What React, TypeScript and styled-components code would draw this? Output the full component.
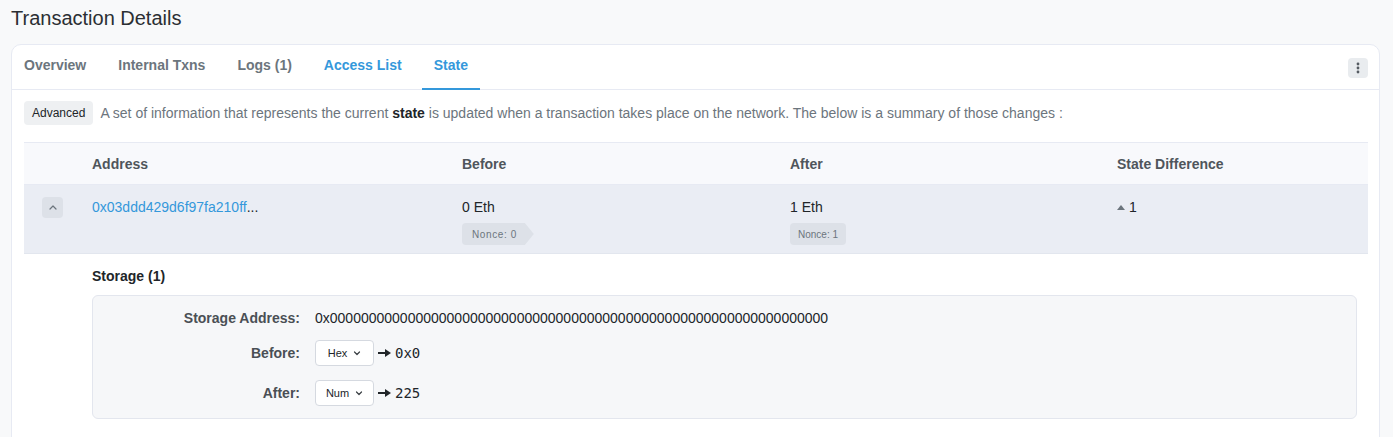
import React from "react";
import styled, { createGlobalStyle } from "styled-components";

const Global = createGlobalStyle`
  html, body { margin: 0; padding: 0; background: #f8f9fa; }
  body { font-family: "Liberation Sans", Arial, sans-serif; color: #212529; }
  * { box-sizing: border-box; }
`;

const Page = styled.div`
  padding: 0 13px 0 11px;
`;

const Title = styled.h1`
  margin: 0;
  padding-top: 6px;
  height: 44px;
  font-size: 20px;
  line-height: 24px;
  font-weight: 400;
  color: #2b2f33;
`;

const Card = styled.div`
  background: #fff;
  border: 1px solid #e7eaf3;
  border-radius: 10px;
  min-height: 420px;
`;

const TabBar = styled.div`
  display: flex;
  align-items: stretch;
  height: 45px;
  border-bottom: 1px solid #e7eaf3;
  padding-right: 11px;
`;

const Tab = styled.div<{ $active?: boolean; $blue?: boolean }>`
  display: flex;
  align-items: center;
  padding: 0 12px 4px;
  margin-right: 8px;
  font-size: 14px;
  font-weight: 700;
  color: ${(p) => (p.$blue ? "#3498db" : "#6c757d")};
  border-bottom: 2px solid ${(p) => (p.$active ? "#3498db" : "transparent")};
  margin-bottom: -1px;
`;

const Spacer = styled.div`
  flex: 1;
`;

const Kebab = styled.div`
  align-self: center;
  width: 20px;
  height: 20px;
  border-radius: 4px;
  background: #e9ecef;
  display: flex;
  align-items: center;
  justify-content: center;
  margin-top: 2px;
`;

const Body = styled.div`
  padding: 11px 11px 0 12px;
`;

const Intro = styled.div`
  display: flex;
  align-items: center;
  gap: 7px;
  font-size: 14px;
  color: #6c757d;
  margin-bottom: 17px;
  b { color: #212529; }
`;

const Badge = styled.span`
  display: inline-flex;
  align-items: center;
  height: 24px;
  padding: 0 8px;
  border-radius: 4px;
  background: #eef0f2;
  color: #212529;
  font-size: 12px;
`;

const Grid = styled.div`
  display: grid;
  grid-template-columns: 68px 370px 328px 327px 1fr;
`;

const HeadRow = styled(Grid)`
  height: 43px;
  align-items: center;
  background: #f8f9fc;
  border-top: 1px solid #e7eaf3;
  border-bottom: 1px solid #e7eaf3;
  font-size: 14px;
  font-weight: 700;
  color: #4f555b;
`;

const DataRow = styled(Grid)`
  background: #eaedf4;
  padding: 14px 0 8px;
  border-bottom: 1px solid #e2e6ee;
  font-size: 14px;
`;

const Cell = styled.div`
  display: flex;
  flex-direction: column;
  align-items: flex-start;
  gap: 7px;
  line-height: 17px;
`;

const ToggleCell = styled.div`
  padding-left: 18px;
  margin-top: -2px;
`;

const Toggle = styled.div`
  width: 21px;
  height: 21px;
  border-radius: 4px;
  background: #dde1e8;
  display: flex;
  align-items: center;
  justify-content: center;
`;

const Link = styled.span`
  color: #3498db;
  b { color: #212529; font-weight: 400; }
`;

const Nonce = styled.span<{ $arrow?: boolean }>`
  display: inline-flex;
  align-items: center;
  height: 22px;
  padding: 0 ${(p) => (p.$arrow ? "17px" : "8px")} 0 ${(p) => (p.$arrow ? "10px" : "8px")};
  font-size: 10px;
  letter-spacing: ${(p) => (p.$arrow ? "0.6px" : "0")};
  color: #6c757d;
  background: #dde1e8;
  border-radius: 4px;
  clip-path: ${(p) =>
    p.$arrow
      ? "polygon(0 0, calc(100% - 9px) 0, 100% 50%, calc(100% - 9px) 100%, 0 100%)"
      : "none"};
`;

const Diff = styled.span`
  display: inline-flex;
  align-items: center;
  gap: 4px;
  &::before {
    content: "";
    border-left: 4px solid transparent;
    border-right: 4px solid transparent;
    border-bottom: 5px solid #6c757d;
  }
`;

const StorageSection = styled.div`
  padding: 14px 11px 18px 68px;
`;

const StorageTitle = styled.div`
  font-size: 14px;
  font-weight: 700;
  line-height: 17px;
  margin-bottom: 10px;
`;

const StorageBox = styled.div`
  background: #f6f7f9;
  border: 1px solid #e3e6ee;
  border-radius: 6px;
  padding: 14px 0 12px;
  display: grid;
  grid-template-columns: 207px 1fr;
  column-gap: 15px;
  row-gap: 14px;
  align-items: center;
  font-size: 14px;
`;

const Label = styled.div`
  text-align: right;
  font-weight: 700;
  color: #4a4f55;
`;

const Value = styled.div`
  display: flex;
  align-items: center;
  gap: 4px;
`;

const Select = styled.div`
  width: 59px;
  height: 26px;
  border: 1px solid #d5d9e0;
  border-radius: 4px;
  background: #fff;
  display: flex;
  align-items: center;
  justify-content: center;
  gap: 6px;
  font-size: 11px;
  color: #212529;
`;

const Mono = styled.span`
  font-family: "DejaVu Sans Mono", "Liberation Mono", monospace;
  font-size: 14px;
`;

const Arrow = () => (
  <svg width="13" height="8" viewBox="0 0 13 8">
    <rect x="0" y="3" width="8" height="2" fill="#212529" />
    <path d="M7 0 L13 4 L7 8 Z" fill="#212529" />
  </svg>
);

const Chevron = ({ up }: { up?: boolean }) => (
  <svg width="8" height="5" viewBox="0 0 8 5">
    <path
      d={up ? "M1 4 L4 1 L7 4" : "M1.5 1 L4 3.5 L6.5 1"}
      fill="none"
      stroke={up ? "#6c757d" : "#3a3f44"}
      strokeWidth="1.2"
      strokeLinecap="round"
      strokeLinejoin="round"
    />
  </svg>
);

const Dots = () => (
  <svg width="4" height="12" viewBox="0 0 4 12">
    <circle cx="2" cy="2" r="1.4" fill="#555b62" />
    <circle cx="2" cy="6" r="1.4" fill="#555b62" />
    <circle cx="2" cy="10" r="1.4" fill="#555b62" />
  </svg>
);

export default function App() {
  return (
    <Page>
      <Global />
      <Title>Transaction Details</Title>
      <Card>
        <TabBar>
          <Tab>Overview</Tab>
          <Tab>Internal Txns</Tab>
          <Tab>Logs (1)</Tab>
          <Tab $blue>Access List</Tab>
          <Tab $blue $active>State</Tab>
          <Spacer />
          <Kebab>
            <Dots />
          </Kebab>
        </TabBar>
        <Body>
          <Intro>
            <Badge>Advanced</Badge>
            <span>
              A set of information that represents the current <b>state</b> is updated when a
              transaction takes place on the network. The below is a summary of those changes :
            </span>
          </Intro>
          <HeadRow>
            <div />
            <div>Address</div>
            <div>Before</div>
            <div>After</div>
            <div>State Difference</div>
          </HeadRow>
          <DataRow>
            <ToggleCell>
              <Toggle>
                <Chevron up />
              </Toggle>
            </ToggleCell>
            <Cell>
              <Link>
                0x03ddd429d6f97fa210ff<b>...</b>
              </Link>
            </Cell>
            <Cell>
              <span>0 Eth</span>
              <Nonce $arrow>Nonce: 0</Nonce>
            </Cell>
            <Cell>
              <span>1 Eth</span>
              <Nonce>Nonce: 1</Nonce>
            </Cell>
            <Cell>
              <Diff>1</Diff>
            </Cell>
          </DataRow>
          <StorageSection>
            <StorageTitle>Storage (1)</StorageTitle>
            <StorageBox>
              <Label>Storage Address:</Label>
              <Value>0x0000000000000000000000000000000000000000000000000000000000000000</Value>
              <Label>Before:</Label>
              <Value>
                <Select>
                  Hex <Chevron />
                </Select>
                <Arrow />
                <Mono>0x0</Mono>
              </Value>
              <Label>After:</Label>
              <Value>
                <Select>
                  Num <Chevron />
                </Select>
                <Arrow />
                <Mono>225</Mono>
              </Value>
            </StorageBox>
          </StorageSection>
        </Body>
      </Card>
    </Page>
  );
}
